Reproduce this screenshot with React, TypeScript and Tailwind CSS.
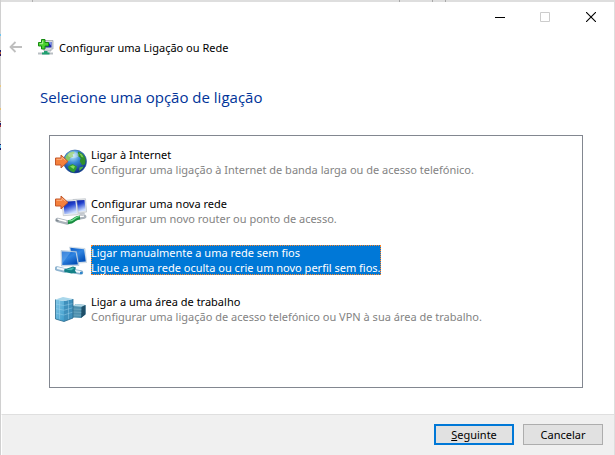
import React, { useState } from "react";

const ConnectionArrow = ({ y }: { y: number }) => (
  <g>
    <path
      d={`M0.5 ${y + 3}h5.500v-3l7 6.500-7 6.500v-3h-5.500z`}
      fill="#f4803c"
      stroke="#c2572a"
      strokeWidth="1"
      strokeLinejoin="round"
    />
    <path d={`M1.500 ${y + 4.3}h5.500v-2l3.500 3`} fill="none" stroke="#fdb284" strokeWidth="1" />
  </g>
);

const GlobeIcon = () => (
  <svg viewBox="0 0 32 32" className="size-8 shrink-0" aria-hidden="true">
    <defs>
      <radialGradient id="sea" cx="0.4" cy="0.25" r="0.8">
        <stop offset="0" stopColor="#c4ecfc" />
        <stop offset="0.4" stopColor="#3a8ad6" />
        <stop offset="1" stopColor="#08247a" />
      </radialGradient>
    </defs>
    <circle cx="20" cy="15.500" r="11.500" fill="url(#sea)" stroke="#2a5a9c" strokeWidth="0.6" />
    <path d="M10.500 10.500c2-3 5-4.800 8-4.900l1.500 1.400-2.500 1.500 1 2-3.500 1.500-.5 2.500-2 1-2-1z" fill="#85c766" />
    <path d="M23 5.500c3.500.8 6 3.500 7.500 7l-.3 5.700-3 1-2.500-4 1-3-3-2.500z" fill="#2f8f2c" />
    <path d="M24 7l3 1.500 1.500 3-2-.5z" fill="#7ccc58" />
    <path d="M13.500 20l4-2 4.500 2.500-1 3-2 3c-3-.5-5-2.500-6-5z" fill="#2f9b33" />
    <path d="M15 20.500l3-1.200 2 1.200-1.500 2.500z" fill="#83dd5c" />
    <path d="M24.500 21.500l4-1c-1 2-2.500 3.500-4.300 4.300z" fill="#4fb743" />
    <ellipse cx="18.500" cy="9" rx="5.500" ry="3" fill="#fff" opacity="0.3" />
    <ConnectionArrow y={9} />
  </svg>
);

const NewNetworkIcon = () => (
  <svg viewBox="0 0 32 32" className="size-8 shrink-0" aria-hidden="true">
    <defs>
      <linearGradient id="navy" x1="0" y1="0" x2="0.4" y2="1">
        <stop offset="0" stopColor="#06128c" />
        <stop offset="0.45" stopColor="#2343cf" />
        <stop offset="1" stopColor="#cfe0ff" />
      </linearGradient>
    </defs>
    <path d="M18 4.500l12.500-.8 1.200 13.300-11 1.500z" fill="#e3e6ea" stroke="#b2b8c0" strokeWidth="0.6" />
    <path d="M19.500 5.600l10-.6 1.100 10.700-9 1.200z" fill="url(#navy)" />
    <path d="M24 18l5-.6 1.500 2-6 .8z" fill="#c3c8ce" />
    <path d="M7 5.500l14.500-.8 1.800 15-15 1z" fill="#eceef1" stroke="#b2b8c0" strokeWidth="0.6" />
    <path d="M8.500 6.700l11.900-.7 1.500 12.300-12.500.9z" fill="url(#navy)" />
    <path d="M2.500 25l10 2.500" fill="none" stroke="#aab2ba" strokeWidth="4.500" strokeLinecap="round" />
    <path d="M2.500 24.300l9 2.200" stroke="#fff" strokeWidth="1.500" />
    <path d="M1 25l2.500 1" stroke="#7f8890" strokeWidth="1.500" />
    <path d="M25 22.500l4.500-.8" stroke="#aab2ba" strokeWidth="4" strokeLinecap="round" />
    <path d="M25 21.700l4-.6" stroke="#fff" strokeWidth="1.200" />
    <path d="M13 27c4 .3 4.500-1 6.500-2.500s3-1.800 5.500-2" fill="none" stroke="#188c40" strokeWidth="4" />
    <path d="M13.500 26c4 .2 4.500-1 6-2.300s3-2 5-2.200" fill="none" stroke="#7be59a" strokeWidth="1.200" />
    <ConnectionArrow y={1} />
  </svg>
);

const WirelessIcon = () => (
  <svg viewBox="0 0 32 32" className="size-8 shrink-0" aria-hidden="true">
    <defs>
      <linearGradient id="blue" x1="0" y1="0" x2="0.7" y2="1">
        <stop offset="0" stopColor="#0c5cc8" />
        <stop offset="0.5" stopColor="#2f84e0" />
        <stop offset="1" stopColor="#0450b8" />
      </linearGradient>
    </defs>
    <path d="M14.500 3l15.500 1.500 1.800 14-14 1z" fill="#dce6ef" stroke="#b5c6d5" strokeWidth="0.5" />
    <path d="M15.300 3.800l13.800 1.400 1.700 12.300-13 1z" fill="url(#blue)" />
    <path d="M6 6.500l15.500 1 2.500 14-17.500.5z" fill="#dce6ef" stroke="#8eaeca" strokeWidth="0.5" />
    <path d="M6.800 7.400l13.900.9 2.200 12.200-15.600.4z" fill="url(#blue)" />
    <path d="M6.800 7.400l9 .6-8.500 11.500z" fill="#8dc7fa" opacity="0.35" />
    <path d="M2 24.500l8 2" fill="none" stroke="#8fb4d0" strokeWidth="4.500" strokeLinecap="round" />
    <path d="M2 24l8 1.800" stroke="#f2f9fd" strokeWidth="2" />
    <path d="M20 27.500l6 1" stroke="#8fb4d0" strokeWidth="4.500" strokeLinecap="round" />
    <path d="M20 27l5.500 1" stroke="#f2f9fd" strokeWidth="2" />
    <path d="M9 25.500l9-3 3 1-1 3 1.500 2.500-5 .5-7-1.500z" fill="#148087" />
    <path d="M11 25.800l7-2.300 1 .8-2.500 2z" fill="#49bdb5" />
    <path d="M25 29h2.500" stroke="#2f86cc" strokeWidth="2" />
  </svg>
);

const WorkplaceIcon = () => (
  <svg viewBox="0 0 32 32" className="size-8 shrink-0" aria-hidden="true">
    <defs>
      <linearGradient id="glass" x1="0" y1="0" x2="1" y2="1">
        <stop offset="0" stopColor="#84c9e8" />
        <stop offset="1" stopColor="#3e9ccb" />
      </linearGradient>
    </defs>
    <path d="M18 13l3-2 9.500 1v9l-4.500 4-8-.5z" fill="#4e90ae" />
    <path d="M18 13l3-2 9.500 1-4 1.800z" fill="#b0d6e4" />
    <path d="M26.500 14l4-2v9.500l-4.500 3.500z" fill="#1f4f69" />
    <path d="M18 16l8.300.5M18 19l8.300.5M18 22l8.300.3" stroke="#86bace" strokeWidth="0.5" />
    <path d="M.5 6.500l8.500 1.500v20.500l-8.500-2.500z" fill="url(#glass)" />
    <path d="M9 8l9-2v19l-9 3.500z" fill="#3f90bc" />
    <path d="M.5 6.500l7.500-2.500 10 2-9 2z" fill="#a9d7eb" />
    <path
      d="M.5 11l8.500 1.500 9-2M.5 15.500l8.500 1.700 9-2.500M.5 20l8.500 2 9-3M4.500 7.200v19.500M13.500 7v19.300"
      fill="none"
      stroke="#a5d9f0"
      strokeWidth="0.6"
      opacity="0.7"
    />
    <path d="M.5 6.500v19.500l8.500 2.500 9-3.500v-19" fill="none" stroke="#28688c" strokeWidth="0.8" />
  </svg>
);

const WizardIcon = () => (
  <svg viewBox="0 0 16 16" className="size-4 shrink-0" aria-hidden="true">
    <path d="M5 1.500h10v8.500h-2v2h-7v-2h-1z" fill="#d5d8dc" stroke="#a2a7ad" strokeWidth="0.8" />
    <path d="M6.500 3h7v5.500h-7z" fill="#1b27a8" />
    <path d="M10 3h3.500v4z" fill="#7f94e8" />
    <path d="M0 13.500h15v2h-15z" fill="#b8bec3" />
    <path d="M6 12h3.500v1.500h2v2h-7.500v-2h2z" fill="#1f9f70" />
    <path d="M3.500.5h3.500v3h3.500v3.500h-3.500v3h-3.500v-3h-3v-3.500h3z" fill="#4bd22f" stroke="#178a12" strokeWidth="1" />
    <path d="M4.700 1.700v3h-3" fill="none" stroke="#b5f29d" strokeWidth="1" />
  </svg>
);

const options = [
  {
    id: "internet",
    title: "Ligar à Internet",
    description: "Configurar uma ligação à Internet de banda larga ou de acesso telefónico.",
    icon: <GlobeIcon />,
  },
  {
    id: "new-network",
    title: "Configurar uma nova rede",
    description: "Configurar um novo router ou ponto de acesso.",
    icon: <NewNetworkIcon />,
  },
  {
    id: "wireless",
    title: "Ligar manualmente a uma rede sem fios",
    description: "Ligue a uma rede oculta ou crie um novo perfil sem fios.",
    icon: <WirelessIcon />,
  },
  {
    id: "workplace",
    title: "Ligar a uma área de trabalho",
    description: "Configurar uma ligação de acesso telefónico ou VPN à sua área de trabalho.",
    icon: <WorkplaceIcon />,
  },
];

const App = () => {
  const [selected, setSelected] = useState("wireless");

  return (
    <div className="min-h-screen flex bg-[#dedede] pr-px font-['Noto_Sans',sans-serif] text-[11px] leading-[15px] text-black">
      {/* Sliver of the window behind */}
      <div className="w-px bg-[linear-gradient(#d0d0d0_34px,#6cc5ef_34px_36px,#d0d0d0_36px_50px,#20206c_50px_52px,#b0603c_52px_54px,#301058_54px_56px,#d0d0d0_56px_85px,#e8c880_85px_87px,#d0d0d0_87px_108px,#e8c070_108px_110px,#d0d0d0_110px_121px,#8c6450_121px_122px,#d0d0d0_122px_123px,#20206c_123px_125px,#a03038_125px_127px,#d0d0d0_127px_144px,#20206c_144px_145px,#6cc5ef_145px_148px,#20206c_148px_150px,#d0d0d0_150px)]" />

      <div className="flex-1 flex flex-col">
        <div className="h-[2px] bg-[linear-gradient(90deg,transparent_31px,#b0b0b0_31px_32px,transparent_32px_398px,#a8a8a8_398px_399px,transparent_399px_431px,#a8a8a8_431px_432px,transparent_432px_444px,#a8a8a8_444px_445px,transparent_445px)]" />

        <main className="flex-1 flex flex-col bg-white">
          {/* Window controls */}
          <div className="flex justify-end h-[30px]">
            <button aria-label="Minimizar" className="w-11 flex items-center justify-center">
              <svg viewBox="0 0 10 10" className="size-[10px]" shapeRendering="crispEdges">
                <path d="M0 5h10v1h-10z" />
              </svg>
            </button>
            <button aria-label="Maximizar" disabled className="w-[46px] flex items-center justify-center">
              <svg viewBox="0 0 10 10" className="size-[10px]">
                <path d="M.5.5h9v9h-9z" fill="none" stroke="#ccc" />
              </svg>
            </button>
            <button aria-label="Fechar" className="w-[46px] flex items-center justify-center">
              <svg viewBox="0 0 10 10" className="size-[10px]">
                <path d="M0 0l10 10M10 0l-10 10" fill="none" stroke="#000" strokeWidth="1.1" />
              </svg>
            </button>
          </div>

          {/* Header */}
          <header className="flex items-center h-[30px] pl-2">
            <button aria-label="Retroceder" disabled className="mr-[15px]">
              <svg viewBox="0 0 14 12" className="w-[14px] h-3">
                <path d="M6.500 1l-5 5 5 5M1.500 6h11.500" fill="none" stroke="#bfbfbf" strokeWidth="1.800" />
              </svg>
            </button>
            <WizardIcon />
            <span className="ml-[5px]">Configurar uma Ligação ou Rede</span>
          </header>

          <h1 className="mt-[23px] ml-[39px] font-['Open_Sans',sans-serif] text-[15px] leading-6 text-[#003399]">
            Selecione uma opção de ligação
          </h1>

          {/* Options */}
          <ul className="flex-1 flex flex-col gap-[17px] mt-[26px] mb-[26px] ml-12 mr-[31px] border border-[#828790] pt-[10px] pl-[5px]">
            {options.map((o) => (
              <li key={o.id}>
                <button
                  onClick={() => setSelected(o.id)}
                  aria-pressed={selected === o.id}
                  className="flex items-center gap-1 text-left"
                >
                  {o.icon}
                  <span
                    className={
                      selected === o.id
                        ? "bg-[#0078d7] text-white outline-1 -outline-offset-1 outline-dotted outline-[#ff8728]"
                        : ""
                    }
                  >
                    <span className="block">{o.title}</span>
                    <span className={selected === o.id ? "block" : "block text-[#838383]"}>
                      {o.description}
                    </span>
                  </span>
                </button>
              </li>
            ))}
          </ul>
        </main>

        {/* Footer */}
        <footer className="flex justify-end gap-[9px] border-t border-[#dfdfdf] border-l border-l-white bg-[#f0f0f0] pt-[9px] pb-[10px] pr-[11px]">
          <button className="w-20 h-[21px] border-2 border-[#0078d7] bg-[#e1e1e1] flex items-center justify-center">
            <span className="underline">S</span>eguinte
          </button>
          <button className="w-20 h-[21px] border border-[#adadad] bg-[#e1e1e1] flex items-center justify-center">
            Cancelar
          </button>
        </footer>
      </div>
    </div>
  );
};

export default App;
